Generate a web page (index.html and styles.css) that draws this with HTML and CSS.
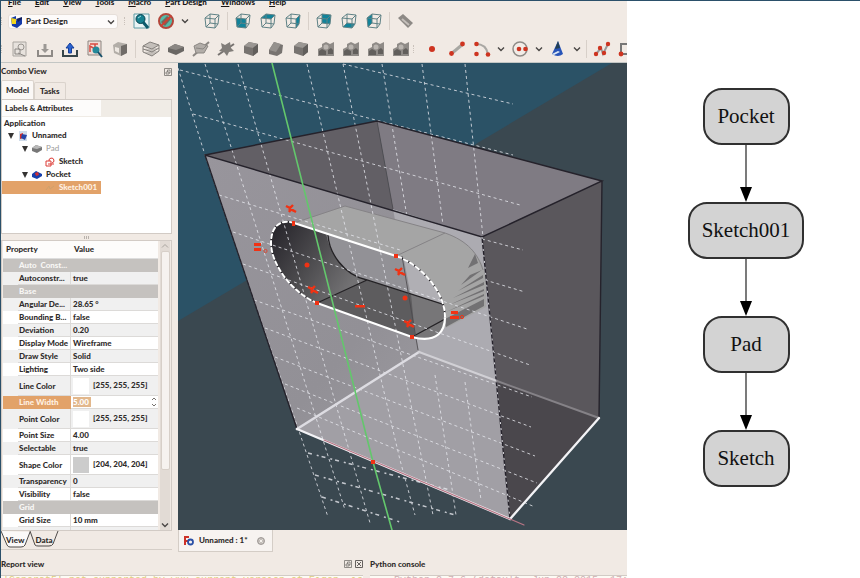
FILE: index.html
```html
<!DOCTYPE html>
<html lang="en">
<head>
<meta charset="utf-8">
<title>Part Design</title>
<link rel="stylesheet" href="styles.css">
</head>
<body>
<svg class="defs" aria-hidden="true">
  <symbol id="cube" viewBox="0 0 18 18"><path d="M2 6 L7 2 L16 3 L12 7 Z M2 6 L3 15 L12 16 L12 7 M16 3 L15 12 L12 16 M7 2 L7 11 L3 15 M7 11 L15 12" fill="none" stroke="#5f8286" stroke-width="1"/></symbol>
  <symbol id="solid" viewBox="0 0 18 18"><path d="M2 6 L7 2 L16 4 L16 12 L11 16 L2 13 Z" fill="#777370"/><path d="M2 6 L7 2 L16 4 L11 8 Z" fill="#9b9793"/><path d="M11 8 L16 4 V12 L11 16Z" fill="#625f5c"/></symbol>
  <symbol id="multi" viewBox="0 0 18 18"><path d="M1 16 V9 L5 7 V4 L9 2 L13 4 L17 2 V16 Z" fill="#8f8b87"/><path d="M2 11 L5 9 L9 11 V15 H2 Z M11 10 L14 8 L16 10 V14 H11 Z" fill="#625f5c"/><circle cx="9" cy="7" r="2.500" fill="#bab5b0"/></symbol>
  <symbol id="chev" viewBox="0 0 8 8"><path d="M1 2.5 L4 5.5 L7 2.5" fill="none" stroke="#4a4745" stroke-width="1.4"/></symbol>
  <symbol id="xmark" viewBox="0 0 12 12"><path d="M1 3 L5 5 L8 2 M4 9 L6 6 L11 9 M3 5 L9 8" fill="none" stroke="#f03214" stroke-width="2.4"/></symbol>
</svg>
<div class="page">
  <main class="app">
    <nav class="menu">
      <a href="#"><u>F</u>ile</a><a href="#"><u>E</u>dit</a><a href="#"><u>V</u>iew</a><a href="#"><u>T</u>ools</a><a href="#"><u>M</u>acro</a><a href="#"><u>P</u>art Design</a><a href="#"><u>W</u>indows</a><a href="#"><u>H</u>elp</a>
    </nav>
    <div class="toolbar">
      <span class="handle"></span>
      <div class="workbench">
        <svg viewBox="0 0 12 12" class="wb-icon"><path d="M0 2 L5 0 L5 4 L7 5 L11 2 V8 L6 12 L1 10 Z" fill="#153ba8"/><path d="M0 2 L5 3 V8 L1 8Z" fill="#f2d51c"/><path d="M5 3 L11 1 V3 L7 6Z" fill="#12205e"/></svg>
        <select aria-label="Workbench"><option>Part Design</option></select>
        <svg class="wb-chev"><use href="#chev"/></svg>
      </div>
      <span class="handle wide"></span>
      <button class="tool" aria-label="Fit all"><svg viewBox="0 0 18 18"><path d="M2 2H17V16H2Z" fill="#e9f4f5" stroke="#5f9ca5"/><circle cx="8.500" cy="7" r="4.500" fill="#16808f" stroke="#0c4450"/><path d="M11 10 L16 16" stroke="#0c5a6b" stroke-width="3"/><path d="M6 6 L9 4" stroke="#9edbe0"/></svg></button>
      <button class="tool" aria-label="Draw style"><svg viewBox="0 0 18 18"><circle cx="9" cy="9" r="7" fill="#54bba9" stroke="#b3463a" stroke-width="2"/><path d="M4 10 L10 4 L14 7 L8 14Z" fill="#73695d"/><path d="M4 14 L14 4" stroke="#cf4034" stroke-width="2"/></svg></button>
      <button class="drop" aria-label="Draw style options"><svg><use href="#chev"/></svg></button>
      <span class="space"></span>
      <button class="tool" aria-label="Axonometric"><svg><use href="#cube"/></svg></button>
      <span class="sep"></span>
      <button class="tool" aria-label="Front"><svg viewBox="0 0 18 18"><path d="M2 6 L12 7 V16 L3 15Z" fill="#11839a"/><use href="#cube"/></svg></button>
      <button class="tool" aria-label="Top"><svg viewBox="0 0 18 18"><path d="M2 6 L7 2 L16 3 L12 7Z" fill="#11839a"/><use href="#cube"/></svg></button>
      <button class="tool" aria-label="Right"><svg viewBox="0 0 18 18"><path d="M12 7 L16 3 L15 12 L12 16Z" fill="#11839a"/><use href="#cube"/></svg></button>
      <span class="sep"></span>
      <button class="tool" aria-label="Rear"><svg viewBox="0 0 18 18"><path d="M7 2 L16 3 L15 12 L7 11Z" fill="#11839a"/><use href="#cube"/></svg></button>
      <button class="tool" aria-label="Bottom"><svg viewBox="0 0 18 18"><path d="M3 15 L7 11 L15 12 L12 16Z" fill="#11839a"/><use href="#cube"/></svg></button>
      <button class="tool" aria-label="Left"><svg viewBox="0 0 18 18"><path d="M2 6 L7 2 V11 L3 15Z" fill="#11839a"/><use href="#cube"/></svg></button>
      <span class="sep"></span>
      <button class="tool" aria-label="Measure"><svg viewBox="0 0 18 18"><path d="M2 6 L7 2 L17 11 L12 16Z" fill="#8d8985"/><path d="M6 7 L13 13" stroke="#c4bfba" stroke-width="2"/></svg></button>
    </div>
    <div class="toolbar second">
      <span class="handle"></span>
      <button class="tool" aria-label="New sketch"><svg viewBox="0 0 18 18"><path d="M2 2H15V16H2Z" fill="#e7e2dd" stroke="#aaa6a1"/><circle cx="10" cy="7" r="3" fill="none" stroke="#98948f"/><path d="M4 9 H9 V14 H4Z M7 13 L14 16" fill="none" stroke="#8b8783"/></svg></button>
      <button class="tool" aria-label="Leave sketch"><svg viewBox="0 0 18 18"><path d="M2 10 V16 H16 V10" fill="none" stroke="#8e8a86" stroke-width="2"/><path d="M9 13 L5 9 H7.500 V4 H10.500 V9 H13Z" fill="#9c9894"/></svg></button>
      <button class="tool" aria-label="View sketch"><svg viewBox="0 0 18 18"><path d="M2 10 V16 H16 V10" fill="none" stroke="#36454a" stroke-width="2"/><path d="M9 3 L5 8 H7.500 V13 H10.500 V8 H13Z" fill="#2a63d0" stroke="#173f98"/></svg></button>
      <button class="tool" aria-label="Map sketch"><svg viewBox="0 0 18 18"><path d="M2 1H15V15H2Z" fill="#f1dcd6" stroke="#8a8580"/><path d="M4 4 H12 M4 12 V6 L9 9 V4" fill="none" stroke="#d94a40" stroke-width="1.500"/><circle cx="10" cy="10" r="3.500" fill="#25899a"/><path d="M12 12 L16 17" stroke="#174f69" stroke-width="2"/></svg></button>
      <button class="tool" aria-label="Validate"><svg viewBox="0 0 18 18"><path d="M2 5 L7 2 L16 4 V13 L10 16 L3 13Z" fill="#b3aea8"/><path d="M10 6 L16 4 V13 L10 16Z" fill="#706c68"/><path d="M4 7 L8 8 V13 L4 11Z" fill="#eee8e2"/></svg></button>
      <span class="sep"></span>
      <button class="tool" aria-label="Pad"><svg viewBox="0 0 18 18"><path d="M1 6 L8 2 L17 5 L10 9Z M1 9 L10 12 L17 8 M1 12 L10 16 L17 11 M1 6 V12 M17 5 V11" fill="#c4bfba" stroke="#85817d"/></svg></button>
      <button class="tool" aria-label="Pocket"><svg viewBox="0 0 18 18"><path d="M1 8 L8 4 L17 7 V11 L9 15 L1 12Z" fill="#6a6764"/><path d="M1 8 L8 4 L17 7 L9 10Z" fill="#8b8783"/></svg></button>
      <button class="tool" aria-label="Revolution"><svg viewBox="0 0 18 18"><path d="M1 16 L17 2" stroke="#8b8783" stroke-width="2"/><path d="M2 6 L8 3 L16 6 L12 13 L4 13Z" fill="#b2ada8" stroke="#8b8783"/><path d="M4 8 L11 9 L14 6" fill="none" stroke="#8b8783"/></svg></button>
      <button class="tool" aria-label="Groove"><svg viewBox="0 0 18 18"><path d="M1 15 L17 4" stroke="#777370" stroke-width="2"/><path d="M4 3 L8 5 L13 2 L14 8 L17 11 L12 12 L10 16 L7 12 L2 11 L5 8Z" fill="#817d79"/></svg></button>
      <button class="tool" aria-label="Fillet"><svg><use href="#solid"/></svg></button>
      <button class="tool" aria-label="Chamfer"><svg viewBox="0 0 18 18"><path d="M2 10 L7 2 L16 5 L15 13 L10 16 L2 14Z" fill="#777370"/><path d="M2 10 L7 2 L14 4 L9 12Z" fill="#95918d"/></svg></button>
      <button class="tool" aria-label="Draft"><svg><use href="#solid"/></svg></button>
      <button class="tool" aria-label="Mirrored"><svg><use href="#multi"/></svg></button>
      <button class="tool" aria-label="Linear pattern"><svg><use href="#multi"/></svg></button>
      <button class="tool" aria-label="Polar pattern"><svg><use href="#multi"/></svg></button>
      <button class="tool" aria-label="Multi transform"><svg><use href="#multi"/></svg></button>
      <span class="handle"></span>
      <button class="tool" aria-label="Point"><svg viewBox="0 0 18 18"><circle cx="9" cy="9" r="3" fill="#ce3420"/></svg></button>
      <button class="tool" aria-label="Line"><svg viewBox="0 0 18 18"><path d="M3 14 L15 4" stroke="#a8a7a2" stroke-width="3"/><circle cx="3.500" cy="13.500" r="2.400" fill="#ce3420"/><circle cx="14.500" cy="4" r="2.400" fill="#ce3420"/></svg></button>
      <button class="tool" aria-label="Arc"><svg viewBox="0 0 18 18"><path d="M3 4 Q13 4 15 14" fill="none" stroke="#aaa8a4" stroke-width="2"/><circle cx="3.500" cy="4" r="2.300" fill="#ce3420"/><circle cx="3.500" cy="14" r="2.300" fill="#ce3420"/><circle cx="15" cy="14.500" r="2.300" fill="#ce3420"/></svg></button>
      <button class="drop" aria-label="Arc options"><svg><use href="#chev"/></svg></button>
      <button class="tool" aria-label="Circle"><svg viewBox="0 0 18 18"><circle cx="9" cy="9" r="7" fill="#f2ece7" stroke="#8f8c88" stroke-width="1.500"/><circle cx="8" cy="9" r="2.300" fill="#ce3420"/><circle cx="14.500" cy="9" r="2.300" fill="#ce3420"/></svg></button>
      <button class="drop" aria-label="Circle options"><svg><use href="#chev"/></svg></button>
      <button class="tool" aria-label="Conic"><svg viewBox="0 0 18 18"><path d="M9 1 L14 14 Q9 18 3 14Z" fill="#2754b8"/><path d="M9 1 L11 8 L6 9Z" fill="#244052"/><path d="M3 14 L9 11 L11 12 L5 15Z" fill="#dae6f3"/></svg></button>
      <button class="drop" aria-label="Conic options"><svg><use href="#chev"/></svg></button>
      <span class="sep"></span>
      <button class="tool" aria-label="Polyline"><svg viewBox="0 0 18 18"><path d="M3 14 L8 8 L10 14 L15 4" fill="none" stroke="#999" stroke-width="2"/><circle cx="3" cy="14" r="2.200" fill="#ce3420"/><circle cx="7" cy="8" r="2.200" fill="#ce3420"/><circle cx="11" cy="13" r="2.200" fill="#ce3420"/><circle cx="15" cy="4" r="2.200" fill="#ce3420"/></svg></button>
      <button class="tool" aria-label="Rectangle"><svg viewBox="0 0 18 18"><path d="M3 4 H15 V14 H3Z" fill="none" stroke="#777" stroke-width="2"/><circle cx="3" cy="14" r="2.400" fill="#ce3420"/></svg></button>
    </div>

    <div class="work">
      <aside class="combo">
        <h2 class="dock-title">Combo View <svg viewBox="0 0 8 8"><path d="M.5 .5H7.500V7.500H.5Z M2 4H5V6H2Z M3.500 4V2H6V5H5" fill="none" stroke="#77736f" stroke-width=".8"/></svg></h2>
        <div class="tabs"><button class="tab on">Model</button><button class="tab">Tasks</button></div>
        <div class="tree">
          <div class="tree-head"><span>Labels &amp; Attributes</span></div>
          <div class="node root">Application</div>
          <div class="node l1"><i></i><svg viewBox="0 0 10 10"><path d="M1 0H9V10H1Z" fill="#cfdbe9"/><path d="M2 3 L5 2 V7 L2 8Z" fill="#d12e2b"/><path d="M4 3 L9 4 L7 9 L3 7Z" fill="#2545a7"/></svg>Unnamed</div>
          <div class="node l2 dim"><i></i><svg viewBox="0 0 10 10"><path d="M0 4 L4 1 L10 3 V6 L5 9 L0 7Z" fill="#777"/><path d="M0 4 L4 1 L10 3 L5 5Z" fill="#b9b9b9"/></svg>Pad</div>
          <div class="node l3"><svg viewBox="0 0 10 10"><path d="M1 4H6V9H1Z M4 4 A2.500 2.500 0 1 1 7 6 M3 7 H9" fill="none" stroke="#dc3a35"/></svg>Sketch</div>
          <div class="node l2"><i></i><svg viewBox="0 0 10 10"><path d="M0 4 L4 1 L10 4 V6 L5 9 L0 7Z" fill="#173fab"/><path d="M3 3 L6 2 L7 5 L4 6Z" fill="#d32f32"/></svg>Pocket</div>
          <div class="node l3 selected"><svg viewBox="0 0 10 10"><path d="M1 7 L4 3 L5 6 L9 3" fill="none" stroke="#cfa06c"/></svg>Sketch001</div>
        </div>
        <div class="splitter"></div>
        <div class="props">
          <div class="prop-view">
            <table>
              <colgroup><col class="c0"><col class="c1"><col class="c2"></colgroup>
              <thead><tr><th colspan="2">Property</th><th>Value</th></tr></thead>
              <tbody>
                <tr class="group"><td></td><td>Auto&nbsp; Const...</td><td></td></tr>
                <tr class="alt"><td></td><td>Autoconstr...</td><td>true</td></tr>
                <tr class="group"><td></td><td>Base</td><td></td></tr>
                <tr class="alt"><td></td><td>Angular De...</td><td>28.65 °</td></tr>
                <tr><td></td><td>Bounding B...</td><td>false</td></tr>
                <tr class="alt"><td></td><td>Deviation</td><td>0.20</td></tr>
                <tr><td></td><td>Display Mode</td><td>Wireframe</td></tr>
                <tr class="alt"><td></td><td>Draw Style</td><td>Solid</td></tr>
                <tr><td></td><td>Lighting</td><td>Two side</td></tr>
                <tr class="alt tall"><td></td><td>Line Color</td><td><span class="swatch white"></span>[255, 255, 255]</td></tr>
                <tr class="edit"><td></td><td><label for="lw">Line Width</label></td><td><div class="spin"><input id="lw" value="5.00"><svg viewBox="0 0 6 10"><path d="M1 3 L3 1 L5 3 M1 7 L3 9 L5 7" fill="none" stroke="#77736f"/></svg></div></td></tr>
                <tr class="alt tall"><td></td><td>Point Color</td><td><span class="swatch white"></span>[255, 255, 255]</td></tr>
                <tr><td></td><td>Point Size</td><td>4.00</td></tr>
                <tr class="alt"><td></td><td>Selectable</td><td>true</td></tr>
                <tr class="tall"><td></td><td>Shape Color</td><td><span class="swatch"></span>[204, 204, 204]</td></tr>
                <tr class="alt"><td></td><td>Transparency</td><td>0</td></tr>
                <tr><td></td><td>Visibility</td><td>false</td></tr>
                <tr class="group"><td></td><td>Grid</td><td></td></tr>
                <tr><td></td><td>Grid Size</td><td>10 mm</td></tr>
                <tr class="alt"><td></td><td>Grid Snap</td><td>false</td></tr>
              </tbody>
            </table>
          </div>
          <div class="scroll"><svg viewBox="0 0 8 8"><path d="M1 5.500 L4 2.500 L7 5.500" fill="none" stroke="#aaa5a0"/></svg><span></span><svg><use href="#chev"/></svg></div>
        </div>
        <div class="bottom-tabs">
          <svg viewBox="0 0 60 18" preserveAspectRatio="none"><path d="M0 0 L6 14 Q7 16 9 16 H20 Q23 16 24 14 L29 1" fill="#fbf9f8" stroke="#4e4b49"/><path d="M29 0 L34 14 Q35 15 37 15 H48 Q51 15 52 13 L57 0" fill="none" stroke="#4e4b49"/></svg>
          <button>View</button><button>Data</button>
        </div>
      </aside>

      <section class="view">
        <svg class="scene" viewBox="178 63 449 467" preserveAspectRatio="none" role="img" aria-label="3D view of the part">
          <defs>
            <linearGradient id="front" x1="0" y1="0" x2="1" y2="1"><stop offset="0" stop-color="#98959c"/><stop offset=".5" stop-color="#929096"/><stop offset="1" stop-color="#a5a3a8"/></linearGradient>
            <linearGradient id="bore" x1="272" y1="235" x2="350" y2="285" gradientUnits="userSpaceOnUse"><stop offset="0" stop-color="#29272d"/><stop offset=".5" stop-color="#4c4b4e"/><stop offset="1" stop-color="#727173"/></linearGradient>
            <clipPath id="slot"><path d="M294 223 L396 256 C418 263 445 290 445 317 C445 330 438 344 412 337 L317 303 C292 293 271 264 271 243 C271 224 283 219 294 223Z"/></clipPath>
          </defs>
          <path d="M178 63H627V530H178Z" fill="#3a4850"/>
          <path d="M178 63H612L178 321Z" fill="#2b5266"/>
          <path d="M205 155 L377 121 L393 209 L482 237Z" fill="#625f65"/>
          <path d="M377 121 L602 181 L482 237 L393 209Z" fill="#7f7b83"/>
          <path d="M482 237 L602 181 L599 418 L510 519Z" fill="#5a575c"/>
          <path d="M497 381 L599 418 L510 519Z" fill="#4a474c"/>
          <path d="M205 155 L482 237 L510 519 L297 429Z" fill="url(#front)"/>
          <path d="M393 209 L482 237 L497 381 L419 352Z" fill="#acabb1"/>
          <path d="M419 352 L497 381 L510 519 L297 429Z" fill="#a19fa5"/>
          <path d="M294 223 L345 206 L445 233 C470 241 486 262 486 282 V307 L446 328 L396 256Z" fill="#a5a5a5"/>
          <path d="M294 223 L345 206 L445 233 C468 241 478 254 483 270 M396 256 L445 233" fill="none" stroke="#858386"/>
          <path d="M475 254 L468 268 L478 263Z M470 275 L461 285 L482 270Z M458 291 L483 275 V278Z M453 298 L484 282 V285Z M449 305 L484 289 V291Z M446 312 L484 294 V296Z M445 319 L484 299 V306 L446 327Z" fill="#727173"/>
          <g clip-path="url(#slot)">
            <path d="M265 215H450V345H265Z" fill="#929196"/>
            <path d="M402 250H450V310L411 296Z" fill="#b0afb4"/>
            <path d="M265 210 L326 230 C327 250 343 275 367 280 L317 303 L265 300Z" fill="url(#bore)"/>
            <path d="M317 303 L367 280 L445 305 V345 H412Z" fill="#5d5c5e"/>
            <path d="M411 294 L445 305 V345 H416Z" fill="#777678"/>
            <path d="M328 235 C329 252 343 275 367 280 L445 305 M367 280 L317 303 M412 337 L445 319" fill="none" stroke="#242225" stroke-width="1.300"/>
          </g>
          <path d="M377 121 L393 209 M402 256 L418 350" stroke="#4a474b" stroke-width=".8"/>
          <g fill="none" stroke="#e7e8ee" stroke-width="1" stroke-dasharray="3 3" opacity=".8">
            <path d="M178 68 L205 155 L254 300 L298 428 L328 517 M205 64 L345 510 M238 64 L370 523 M307 64 L400 460 L415 515 M343 64 L433 515 M382 64 L407 217 M435 375 L456 515 M422 64 L443 225 M465 382 L481 500 M465 64 L483 237"/>
            <path d="M343 64 L513 104 M180 70 L513 155 M193 114 L520 205 M482 239 L523 250 M219 195 L400 250 M485 280 L525 292 M233 232 L527 329 M243 264 L530 365 M254 300 L532 397 M265 328 L531 427 M275 357 L535 456 M285 384 L537 483 M297 408 L535 507"/>
            <path d="M308 453 L450 490 M315 475 L455 515 M322 497 L400 522" stroke-width="1.500" stroke-dasharray="4 5 2 3"/>
          </g>
          <g fill="none" stroke="#25222b" stroke-width="1.400"><path d="M205 155 L377 121 L602 181 L482 237 L205 155 L297 429 M602 181 L599 418 M482 237 L510 519"/></g>
          <path d="M482 237 L510 519" stroke="#d9d9de" stroke-dasharray="2 4"/>
          <g fill="none" stroke-linecap="round">
            <path d="M297 429 L419 352" stroke="#dddce2" stroke-width="2.600"/><path d="M419 352 L497 381" stroke="#d1d0d5" stroke-width="2"/><path d="M497 381 L599 418" stroke="#858287" stroke-width="2"/>
            <path d="M297 429 L510 519 L599 418" stroke="#f3f3f6" stroke-width="2.300"/>
            <path d="M324 440 L524 525" stroke="#b87585" stroke-width="1.200"/>
            <path d="M317 303 L412 337 C438 344 445 330 445 317 M294 223 L396 256" stroke="#fff" stroke-width="2.200"/>
            <path d="M445 317 C445 290 418 263 396 256 M317 303 C292 293 271 264 271 243 C271 224 283 219 294 223" stroke="#232126" stroke-width="1.600"/>
            <path d="M445 317 C445 290 418 263 396 256 M317 303 C292 293 271 264 271 243 C271 224 283 219 294 223" stroke="#fff" stroke-width="2" stroke-dasharray="4 3"/>
            <path d="M272 63 L373 462 L392 530" stroke="#63c76c" stroke-width="1.600"/>
          </g>
          <g fill="#f03214">
            <path d="M292 221h3v5h-3Z M394 254h4v4h-4Z M315 301h4v4h-4Z M410 335h4v4h-4Z M371 460h4v4h-4Z"/>
            <circle cx="307" cy="265" r="2.500"/><circle cx="405" cy="298" r="2.500"/>
            <path d="M254 243h7v3h-7Z M254 248h7v3h-7Z M451 311h7v3h-7Z M450 316h9v3h-9Z M355 305h10v2.500h-10Z"/>
            <circle cx="265.500" cy="251" r="1.600" fill="none" stroke="#d64c38"/><circle cx="462" cy="317" r="1.600" fill="none" stroke="#f03214"/>
            <use href="#xmark" x="285" y="203" width="12" height="12"/><use href="#xmark" x="394" y="266" width="12" height="12"/><use href="#xmark" x="307" y="284" width="12" height="12"/><use href="#xmark" x="403" y="318" width="12" height="12"/>
          </g>
        </svg>
        <div class="doc-tabs"><div class="doc-tab"><svg viewBox="0 0 11 11"><path d="M1 10V1H6V3H3V5H6V7H3V10Z" fill="#cd3229"/><circle cx="7.500" cy="7" r="2.500" fill="none" stroke="#2b50a6" stroke-width="1.800"/></svg><span>Unnamed : 1*</span><button aria-label="Close"><svg viewBox="0 0 8 8"><circle cx="4" cy="4" r="3.500" fill="#c3beb9" stroke="#908c88" stroke-width=".8"/><path d="M2.500 2.500L5.500 5.500M5.500 2.500L2.500 5.500" stroke="#f5f1ed"/></svg></button></div></div>
      </section>
    </div>

    <div class="docks">
      <section><h2 class="dock-title">Report view <span><svg viewBox="0 0 8 8"><path d="M.5 .5H7.500V7.500H.5Z M2 4H5V6H2Z M3.500 4V2H6V5H5" fill="none" stroke="#77736f" stroke-width=".8"/></svg><svg viewBox="0 0 8 8"><path d="M.5 .5H7.500V7.500H.5Z M2 2L6 6M6 2L2 6" fill="none" stroke="#66625f"/></svg></span></h2><div class="log">'Generat5' not supported by wxx current version of Eigen, is</div></section>
      <section><h2 class="dock-title">Python console</h2><div class="log py">Python 2.7.6 (default, Jun 22 2015, 17:58:13)</div></section>
    </div>
  </main>

  <section class="graph" aria-label="Dependency graph">
    <div class="gnode">Pocket</div>
    <svg class="edge" viewBox="0 0 14 57"><path d="M7 0V45" stroke="#333" stroke-width="1.300"/><path d="M1 42H13L7 57Z"/></svg>
    <div class="gnode">Sketch001</div>
    <svg class="edge" viewBox="0 0 14 57"><path d="M7 0V45" stroke="#333" stroke-width="1.300"/><path d="M1 42H13L7 57Z"/></svg>
    <div class="gnode">Pad</div>
    <svg class="edge" viewBox="0 0 14 57"><path d="M7 0V45" stroke="#333" stroke-width="1.300"/><path d="M1 42H13L7 57Z"/></svg>
    <div class="gnode">Sketch</div>
  </section>
</div>
</body>
</html>
```
FILE: styles.css
```css
* { box-sizing: border-box; }
body { margin: 0; background: #fff; color: #2f2c2b; font: 900 8px/13px Lato, "Open Sans", sans-serif; }
button { margin: 0; padding: 0; border: 0; background: none; color: inherit; font: inherit; }
svg { display: block; }
.defs { position: absolute; width: 0; height: 0; }
.page { display: grid; grid-template-columns: 627fr 233fr; height: 100vh; border-top: 1px solid #2b506a; overflow: hidden; }
.app { display: flex; flex-direction: column; min-width: 0; height: 100%; overflow: hidden; background: #f1eae4; border-left: 1px solid #2b506a; }

.menu { display: flex; flex: none; align-items: flex-end; height: 6px; padding: 0 0 1px 7px; gap: 14px; overflow: hidden; line-height: 8px; white-space: nowrap; }
.menu a { color: #171514; text-decoration: none; }

.toolbar { display: flex; flex: none; align-items: center; height: 28px; overflow: hidden; }
.toolbar.second { border-bottom: 1px solid #c3c6c4; }
.tool { flex: none; display: grid; place-items: center; width: 25px; height: 24px; }
.tool svg { width: 18px; height: 18px; }
.drop { flex: none; display: grid; place-items: center; width: 13px; height: 24px; }
.drop svg { width: 8px; height: 8px; }
.handle { flex: none; width: 6px; height: 8px; border-left: 1px dotted #c9c1ba; }
.handle.wide { width: 4px; margin-left: 6px; }
.space { flex: none; width: 8px; }
.sep { flex: none; width: 6px; height: 18px; background: linear-gradient(#d8d0c9, #d8d0c9) center / 1px 100% no-repeat; }
.workbench { position: relative; flex: none; width: 110px; height: 15px; margin-left: 1px; }
.workbench select { width: 100%; height: 100%; padding: 0 0 0 17px; border: 1px solid #e6dfd9; border-radius: 3px; background: #fdfbfa; color: inherit; font: inherit; appearance: none; }
.wb-icon { position: absolute; left: 3px; top: 2px; width: 12px; height: 12px; }
.wb-chev { position: absolute; right: 3px; top: 4px; width: 8px; height: 8px; }

.work { display: flex; flex: 1; min-height: 0; }
.combo { display: flex; flex: none; flex-direction: column; width: 177px; padding: 0 6px 3px 0; }
.dock-title { display: flex; align-items: center; justify-content: space-between; height: 17px; margin: 0; font: inherit; }
.dock-title svg { width: 8px; height: 8px; }
.dock-title span { display: flex; gap: 3px; }
.tabs { display: flex; align-items: flex-end; height: 19px; }
.tab { height: 17px; padding: 0 5px; border: 1px solid #dad3cc; border-bottom: 0; border-radius: 2px 2px 0 0; }
.tab.on { height: 19px; padding: 0 4px; background: #fbf8f6; }
.tree { height: 135px; border: 1px solid #d2cbc5; background: #fff; }
.tree-head { height: 17px; background: #f0ece6; line-height: 16px; }
.tree-head span { display: block; width: 99px; padding-left: 3px; background: #fdfcfb; }
.node { display: flex; align-items: center; height: 13px; padding-left: 2px; gap: 4px; }
.node.root { height: 12px; }
.node i { border: 3px solid transparent; border-top: 6px solid #353332; border-bottom: 0; }
.node svg { width: 10px; height: 10px; }
.node.l1 { padding-left: 6px; gap: 4px; }
.node.l2 { padding-left: 20px; }
.node.l3 { padding-left: 43px; }
.node.dim { color: #9d9b9a; font-weight: normal; }
.node.selected { width: 99px; background: #e2a269; color: #fff1e2; }
.splitter { flex: none; height: 6px; background: repeating-linear-gradient(90deg, #b9b2ac 0 1px, transparent 1px 2px) center / 6px 3px no-repeat; }
.props { display: flex; flex: 1; min-height: 0; padding-left: 1px; border: 1px solid #d2cbc5; }
.prop-view { flex: 1; min-width: 0; overflow: hidden; background: #fff; }
table { width: 100%; border-collapse: separate; border-spacing: 0; table-layout: fixed; }
.c0 { width: 15px; }
.c1 { width: 53px; }
th { height: 18px; padding: 0 3px; text-align: left; font-weight: inherit; background: #fdfcfb; border-bottom: 1px solid #ddd; }
td { height: 13px; padding: 0 1px; line-height: 12px; white-space: nowrap; overflow: hidden; border-bottom: 1px solid #dcdad8; border-right: 1px solid #dcdad8; }
td:first-child { border-color: transparent; }
td:last-child { padding-left: 2px; border-right: 0; }
.alt td { background: #f0f0f0; }
.group td { background: #c5c2bf; border-color: #c5c2bf; color: #f8f7f5; }
.tall td { height: 20px; }
.edit td:nth-child(-n+2) { background: #e2a269; border-color: #e2a269; color: #fff1e2; }
.swatch { display: inline-block; width: 16px; height: 16px; margin-right: 4px; background: #ccc; vertical-align: middle; }
.swatch.white { background: #fff; }
.spin { display: flex; align-items: center; justify-content: space-between; height: 12px; }
.spin input { width: 18px; height: 10px; padding: 0; border: 0; background: #e2b78c; color: #fff; font: inherit; }
.spin svg { width: 6px; height: 10px; }
.scroll { display: flex; flex: none; flex-direction: column; align-items: center; justify-content: space-between; width: 10px; margin: 0 1px 0 2px; background: #e2dbd5; }
.scroll svg { width: 8px; height: 10px; }
.scroll span { flex: 1; width: 9px; margin-bottom: 50px; border: 1px solid #d7cfc8; border-radius: 2px; background: #f6f2ef; }
.bottom-tabs { position: relative; display: flex; flex: none; align-items: center; height: 19px; padding-left: 5px; gap: 11px; border-bottom: 1px solid #d5cec7; }
.bottom-tabs svg { position: absolute; left: 0; top: 0; width: 60px; height: 18px; }
.bottom-tabs button { position: relative; }

.view { display: flex; flex: 1; flex-direction: column; min-width: 0; }
.scene { flex: 1; width: 100%; min-height: 0; }
.doc-tabs { flex: none; height: 23px; }
.doc-tab { display: inline-flex; align-items: center; height: 22px; padding: 0 7px 0 4px; gap: 5px; border: 1px solid #d4cdc6; border-top: 0; background: #f7f3f0; }
.doc-tab > svg { width: 11px; height: 11px; }
.doc-tab button { margin-left: 4px; }
.doc-tab button svg { width: 8px; height: 8px; }

.docks { display: grid; flex: none; grid-template-columns: 364fr 256fr; gap: 7px; height: 25px; overflow: hidden; }
.docks .dock-title { height: 22px; }
.log { height: 13px; overflow: hidden; border-top: 1px solid #d2cbc5; background: #fdfbf5; color: #dfcf7c; font: 10px/10px "Liberation Mono", monospace; white-space: nowrap; padding-left: 2px; }
.log.py { color: #cfb0b2; padding-left: 24px; }

.graph { display: flex; flex-direction: column; align-items: center; padding: 87px 0 0 5px; background: #fff; }
.gnode { display: grid; flex: none; place-items: center; min-width: 87px; height: 57px; padding: 0 12px 2px; border: 2px solid #303030; border-radius: 19px; background: #d3d3d3; color: #111; font: 21px/24px "Liberation Serif", serif; }
.edge { flex: none; width: 14px; height: 57px; }
```
